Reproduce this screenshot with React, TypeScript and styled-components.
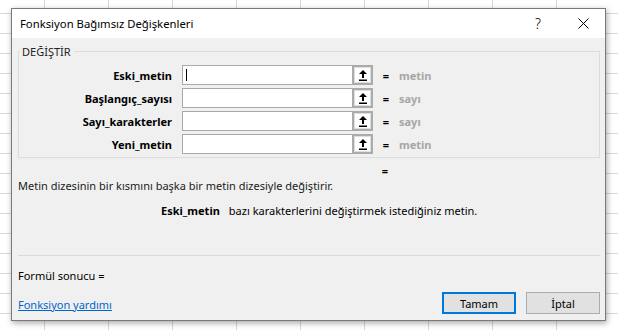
import styled, { createGlobalStyle } from 'styled-components';

const GlobalStyle = createGlobalStyle`
  html, body {
    margin: 0;
    padding: 0;
    background: #fff;
  }
  * {
    box-sizing: border-box;
  }
`;

const FONT = `"Noto Sans", "DejaVu Sans", sans-serif`;

const args = [
    { name: 'Eski_metin', value: 'metin', focused: true },
    { name: 'Başlangıç_sayısı', value: 'sayı' },
    { name: 'Sayı_karakterler', value: 'sayı' },
    { name: 'Yeni_metin', value: 'metin' },
];

function RefIcon() {
    return (
        <svg width="8" height="11" viewBox="0 0 8 11">
            <path d="M4 0 L8 4 L5 4 L5 8 L3 8 L3 4 L0 4 Z" fill="#000" />
            <rect x="0" y="9.5" width="8" height="1.5" fill="#000" />
        </svg>
    );
}

function CloseIcon() {
    return (
        <svg width="11" height="11" viewBox="0 0 11 11">
            <path d="M0.5 0.5 L10.5 10.5 M10.5 0.5 L0.5 10.5" stroke="#000" strokeWidth="1" fill="none" />
        </svg>
    );
}

function App() {
    return (
        <>
            <GlobalStyle />
            <Sheet>
                <Dialog>
                    <TitleBar>
                        <Title>Fonksiyon Bağımsız Değişkenleri</Title>
                        <TitleButtons>
                            <HelpButton>?</HelpButton>
                            <CloseButton><CloseIcon /></CloseButton>
                        </TitleButtons>
                    </TitleBar>

                    <Body>
                        <GroupBox>
                            <Legend>DEĞİŞTİR</Legend>
                            <ArgGrid>
                                {args.map((a) => (
                                    <ArgRow key={a.name}>
                                        <ArgLabel>{a.name}</ArgLabel>
                                        <Field>
                                            <ArgInput>{a.focused && <Caret />}</ArgInput>
                                            <RefButton><RefIcon /></RefButton>
                                        </Field>
                                        <Eq>=</Eq>
                                        <ArgValue>{a.value}</ArgValue>
                                    </ArgRow>
                                ))}
                            </ArgGrid>
                        </GroupBox>

                        <ResultEq>=</ResultEq>
                        <Description>Metin dizesinin bir kısmını başka bir metin dizesiyle değiştirir.</Description>
                        <ArgHelp>
                            <ArgHelpName>Eski_metin</ArgHelpName>
                            <span>bazı karakterlerini değiştirmek istediğiniz metin.</span>
                        </ArgHelp>

                        <Separator />
                        <FormulaResult>Formül sonucu =</FormulaResult>

                        <Footer>
                            <HelpLink href="#">Fonksiyon yardımı</HelpLink>
                            <ButtonRow>
                                <DialogButton primary>Tamam</DialogButton>
                                <DialogButton>İptal</DialogButton>
                            </ButtonRow>
                        </Footer>
                    </Body>
                </Dialog>
            </Sheet>
        </>
    );
}

const Sheet = styled.div`
    width: 618px;
    height: 330px;
    padding: 8px 0 0 11px;
    overflow: hidden;
    background-color: #fff;
    background-image:
        linear-gradient(to right, #d9d9d9 1px, transparent 1px),
        linear-gradient(to bottom, #d9d9d9 1px, transparent 1px);
    background-size: 64px 20px;
    background-position: 44px 13px;
    font-family: ${FONT};
`

const Dialog = styled.div`
    width: 595px;
    height: 313px;
    display: flex;
    flex-direction: column;
    border: 1px solid #7a7a7a;
    background: #f0f0f0;
    box-shadow: 1px 2px 6px rgba(0, 0, 0, 0.35);
`

const TitleBar = styled.div`
    height: 29px;
    display: flex;
    align-items: center;
    padding-left: 8px;
    background: #fff;
`

const Title = styled.div`
    font-size: 11.3px;
    color: #000;
`

const TitleButtons = styled.div`
    margin-left: auto;
    display: flex;
    height: 100%;
`

const HelpButton = styled.div`
    width: 46px;
    display: flex;
    align-items: center;
    justify-content: center;
    font-size: 14px;
    font-weight: 300;
    color: #000;
`

const CloseButton = styled.div`
    width: 44px;
    display: flex;
    align-items: center;
    justify-content: center;
`

const Body = styled.div`
    flex: 1;
    display: flex;
    flex-direction: column;
    padding: 6px 5px 6px 6px;
    font-size: 11px;
    color: #000;
`

const GroupBox = styled.fieldset`
    margin: 0;
    padding: 0 0 3px 0;
    min-width: 0;
    border: 1px solid #dcdcdc;
`

const Legend = styled.legend`
    margin-left: 1px;
    padding: 0 3px 0 2px;
    font-size: 11px;
    line-height: 15px;
    color: #222;
`

const ArgGrid = styled.div`
    display: flex;
    flex-direction: column;
    gap: 3px;
    padding-top: 6px;
`

const ArgRow = styled.div`
    display: flex;
    align-items: center;
    height: 20px;
`

const ArgLabel = styled.div`
    width: 153px;
    text-align: right;
    font-weight: 700;
    white-space: nowrap;
`

const Field = styled.div`
    display: flex;
    margin-left: 10px;
`

const ArgInput = styled.div`
    width: 170px;
    height: 20px;
    display: flex;
    align-items: center;
    padding-left: 3px;
    border: 1px solid #a9a9a9;
    border-right: none;
    background: #fff;
`

const Caret = styled.div`
    width: 1px;
    height: 12px;
    background: #000;
`

const RefButton = styled.div`
    width: 21px;
    height: 20px;
    display: flex;
    align-items: center;
    justify-content: center;
    border: 2px solid #ababab;
    background: #fff;
    box-shadow: inset 0 0 0 1px #dedede;
`

const Eq = styled.div`
    width: 16px;
    margin-left: 5px;
    text-align: center;
    font-weight: 700;
`

const ArgValue = styled.div`
    margin-left: 5px;
    font-weight: 700;
    color: #a6a6a6;
`

const ResultEq = styled.div`
    margin: 5px 0 0 362px;
    width: 10px;
    text-align: center;
    font-weight: 700;
    line-height: 15px;
`

const Description = styled.div`
    line-height: 15px;
    color: #1a1a1a;
`

const ArgHelp = styled.div`
    display: flex;
    gap: 9px;
    margin-top: 10px;
    padding-left: 143px;
    line-height: 15px;
`

const ArgHelpName = styled.span`
    font-weight: 700;
`

const Separator = styled.div`
    margin-top: auto;
    height: 1px;
    background: #dadada;
`

const FormulaResult = styled.div`
    margin-top: 12px;
    line-height: 15px;
`

const Footer = styled.div`
    display: flex;
    align-items: center;
    margin-top: 9px;
`

const HelpLink = styled.a`
    color: #0066cc;
    text-decoration: underline;
    font-size: 11px;
    margin-top: 2px;
`

const ButtonRow = styled.div`
    margin-left: auto;
    display: flex;
    gap: 10px;
`

const DialogButton = styled.button<{ primary?: boolean }>`
    width: 74px;
    height: 22px;
    padding: 0;
    font-family: ${FONT};
    font-size: 11px;
    color: #000;
    background: #e1e1e1;
    border: ${(p) => (p.primary ? '2px solid #0078d7' : '1px solid #adadad')};
`

export default App;
